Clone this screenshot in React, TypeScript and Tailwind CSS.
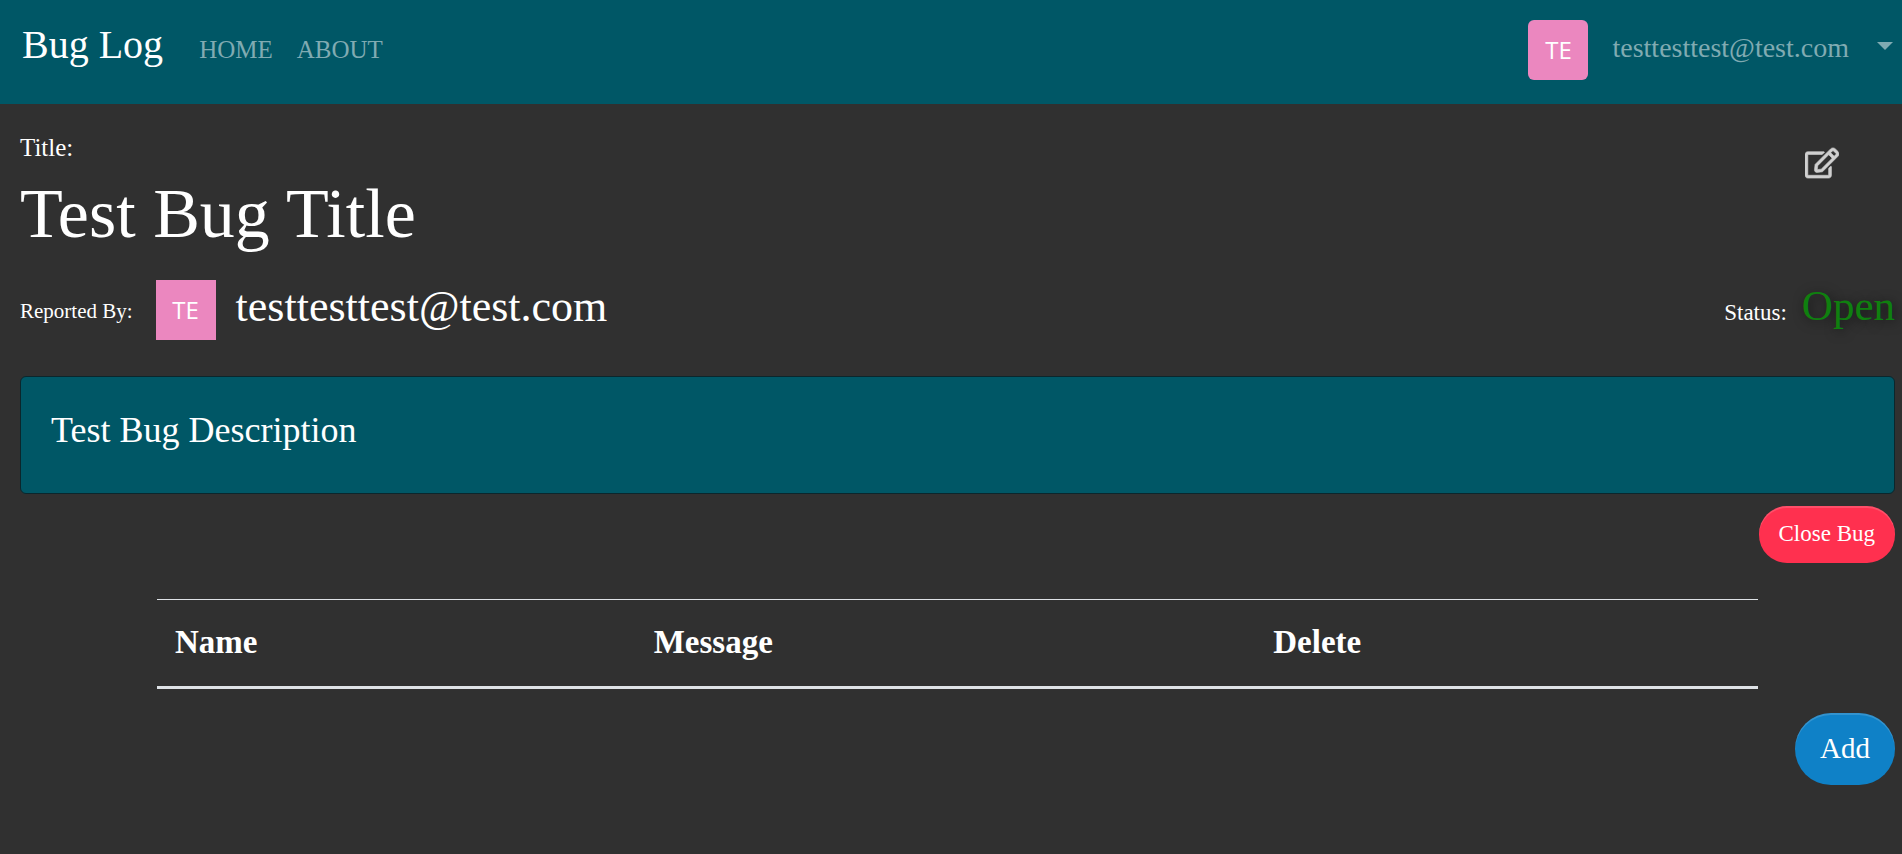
import { FaRegEdit } from "react-icons/fa";

function Avatar({ rounded = false }: { rounded?: boolean }) {
  return (
    <span
      className={`flex size-15 shrink-0 items-center justify-center bg-[#eb87bf] font-['Open_Sans',sans-serif] text-2xl font-normal text-white ${rounded ? "rounded-md" : ""}`}
    >
      TE
    </span>
  );
}

const columns = [
  { label: "Name", width: "w-[29.9%]" },
  { label: "Message", width: "w-[38.7%]" },
  { label: "Delete", width: "w-[31.4%]" },
];

function Navbar() {
  return (
    <header className="flex items-start justify-between bg-[#005766] pt-5 pr-[9px] pb-6 pl-[22px]">
      <nav className="flex items-baseline text-[25px] text-[#80abb2]">
        <a href="#top" className="mr-9 text-[40px] leading-[50px] text-white">
          Bug Log
        </a>
        <a href="#home" className="mr-6">
          HOME
        </a>
        <a href="#about">ABOUT</a>
      </nav>
      <button type="button" className="flex items-center text-[28px] text-[#80abb2]">
        <Avatar rounded />
        <span className="ml-6 pb-1">testtesttest@test.com</span>
        <svg viewBox="0 0 16 8" className="mb-2 ml-7 h-2 w-4" aria-hidden="true">
          <path d="M0 0h16L8 8z" fill="currentColor" />
        </svg>
      </button>
    </header>
  );
}

export default function App() {
  return (
    <div className="min-h-screen bg-[#303030] font-['Liberation_Serif',serif] text-white">
      <Navbar />
      <main className="pt-7 pr-[7px] pb-16 pl-5">
        <div className="flex items-start justify-between">
          <div>
            <p className="text-[25px] leading-8">Title:</p>
            <h1 className="text-[70px] leading-[100px]">Test Bug Title</h1>
          </div>
          <button type="button" aria-label="Edit bug" className="mt-[14px] mr-14 text-[#d0d0d0]">
            <FaRegEdit className="size-[34px] stroke-current stroke-[10px]" />
          </button>
        </div>

        <div className="mt-4 flex items-center justify-between">
          <div className="flex items-center">
            <span className="pt-1 text-[21px]">Reported By:</span>
            <span className="mr-5 ml-[23px]">
              <Avatar />
            </span>
            <span className="pb-1.5 text-[44px] leading-[52px]">testtesttest@test.com</span>
          </div>
          <div className="flex items-baseline pb-2">
            <span className="text-[23px]">Status:</span>
            <span className="ml-[15px] text-[43px] leading-[52px] text-[#0f800f] [text-shadow:2px_2px_12px_#000000a0]">
              Open
            </span>
          </div>
        </div>

        <section className="mt-9 rounded-md border border-[#0b262c] bg-[#005766] px-[30px] pt-[25px] pb-[35px]">
          <p className="text-[36px] leading-[56px]">Test Bug Description</p>
        </section>

        <div className="mt-3 flex justify-end">
          <button
            type="button"
            className="h-[57px] rounded-[28px] bg-[#ff304f] px-5 text-[23px] shadow-[inset_0_2px_0_#ffffff26]"
          >
            Close Bug
          </button>
        </div>

        <div className="mt-9 px-[137px]">
          <table className="w-full table-fixed border-collapse text-left text-[33px]">
            <thead>
              <tr className="h-[88px] border-t border-b-[3px] border-[#dee2e6]">
                {columns.map((column) => (
                  <th key={column.label} scope="col" className={`px-[18px] font-bold ${column.width}`}>
                    {column.label}
                  </th>
                ))}
              </tr>
            </thead>
          </table>
        </div>

        <div className="mt-6 flex justify-end">
          <button
            type="button"
            className="h-[72px] rounded-[36px] bg-[#0f81c7] px-[25px] text-[29px] shadow-[inset_0_2px_0_#ffffff26]"
          >
            Add
          </button>
        </div>
      </main>
    </div>
  );
}
